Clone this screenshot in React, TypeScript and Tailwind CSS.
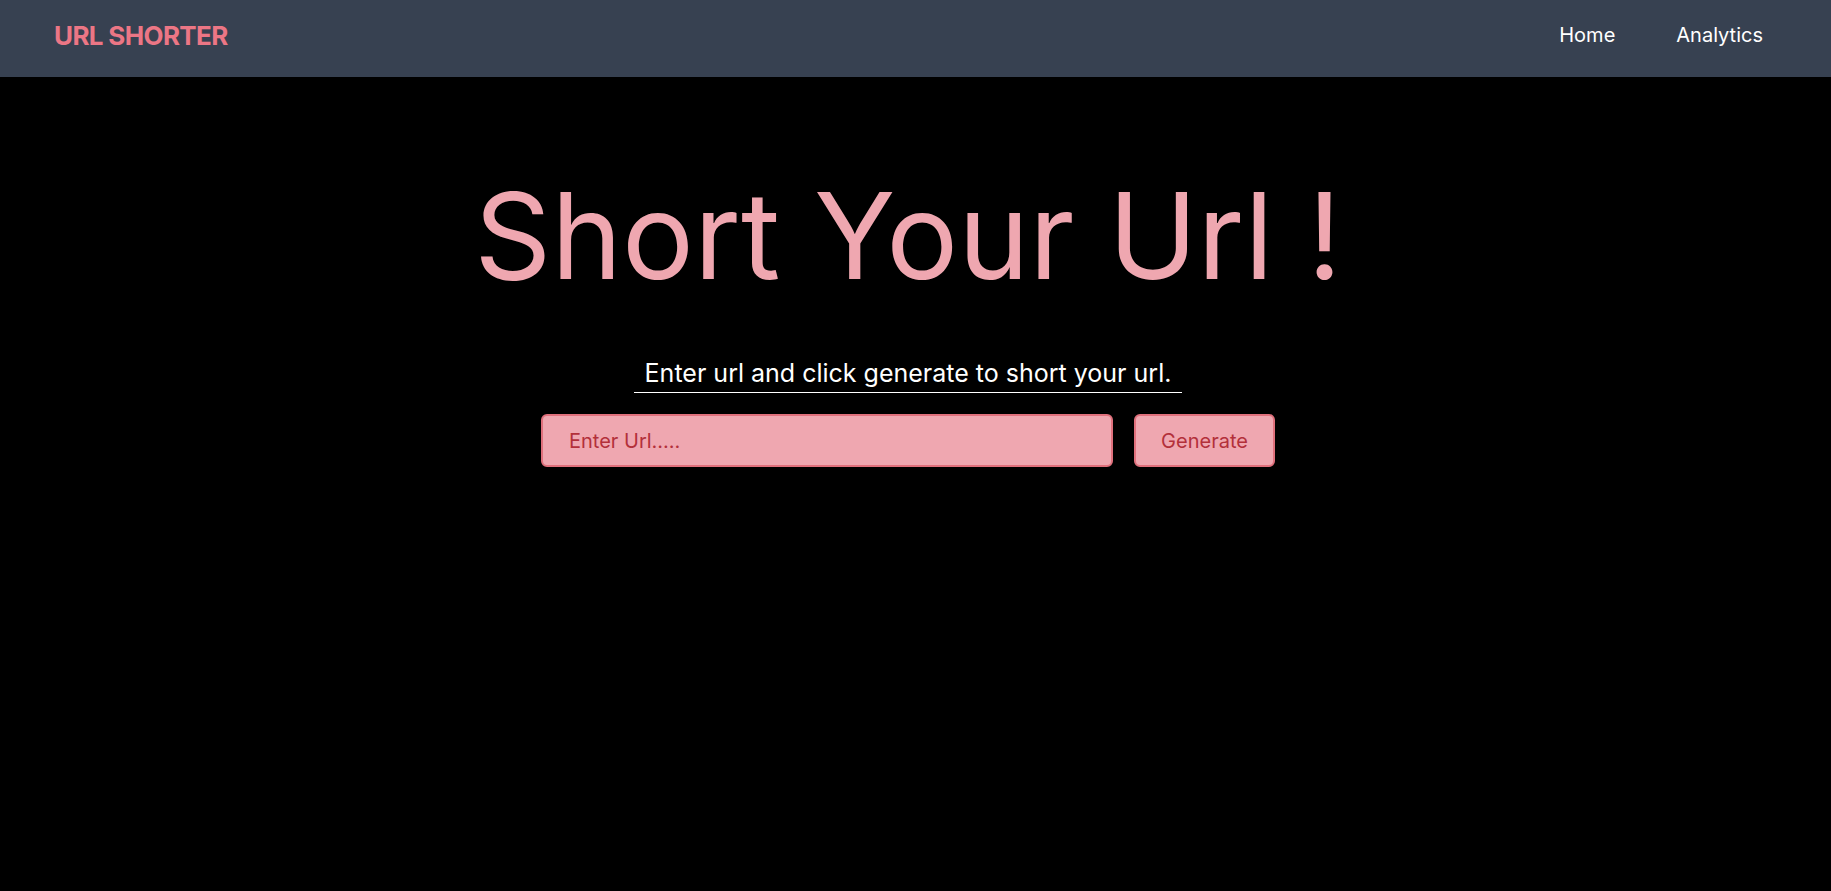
import React from "react";

const App = () => {
  return (
    <div className="min-h-screen bg-black font-['Inter',sans-serif]">
      <nav className="h-[77px] bg-[#374151] flex items-center justify-between pl-[54px] pr-[68px] pb-[7px]">
        <div className="text-[26px] font-bold text-[#ec7685] tracking-tight">URL SHORTER</div>
        <div className="flex items-center gap-[61px] text-xl text-white">
          <a href="#">Home</a>
          <a href="#">Analytics</a>
        </div>
      </nav>
      <main className="flex flex-col items-center pr-[15px]">
        <h1 className="mt-[99px] text-[120px] leading-none text-[#efa7b0]">Short Your Url !</h1>
        <p className="mt-[58px] px-[11px] border-b-[1.5px] border-white text-[25px] leading-[38px] text-white">
          Enter url and click generate to short your url.
        </p>
        <div className="mt-[21px] flex gap-[21px]">
          <input
            type="text"
            placeholder="Enter Url....."
            className="w-[572px] h-[53px] px-[26px] rounded-md border-2 border-[#e0707c] bg-[#efa7b0] text-xl text-[#b3303a] placeholder:text-[#b3303a] outline-none"
          />
          <button className="w-[141px] h-[53px] rounded-md border-2 border-[#e0707c] bg-[#efa7b0] text-xl text-[#b3303a]">
            Generate
          </button>
        </div>
      </main>
    </div>
  );
};

export default App;
